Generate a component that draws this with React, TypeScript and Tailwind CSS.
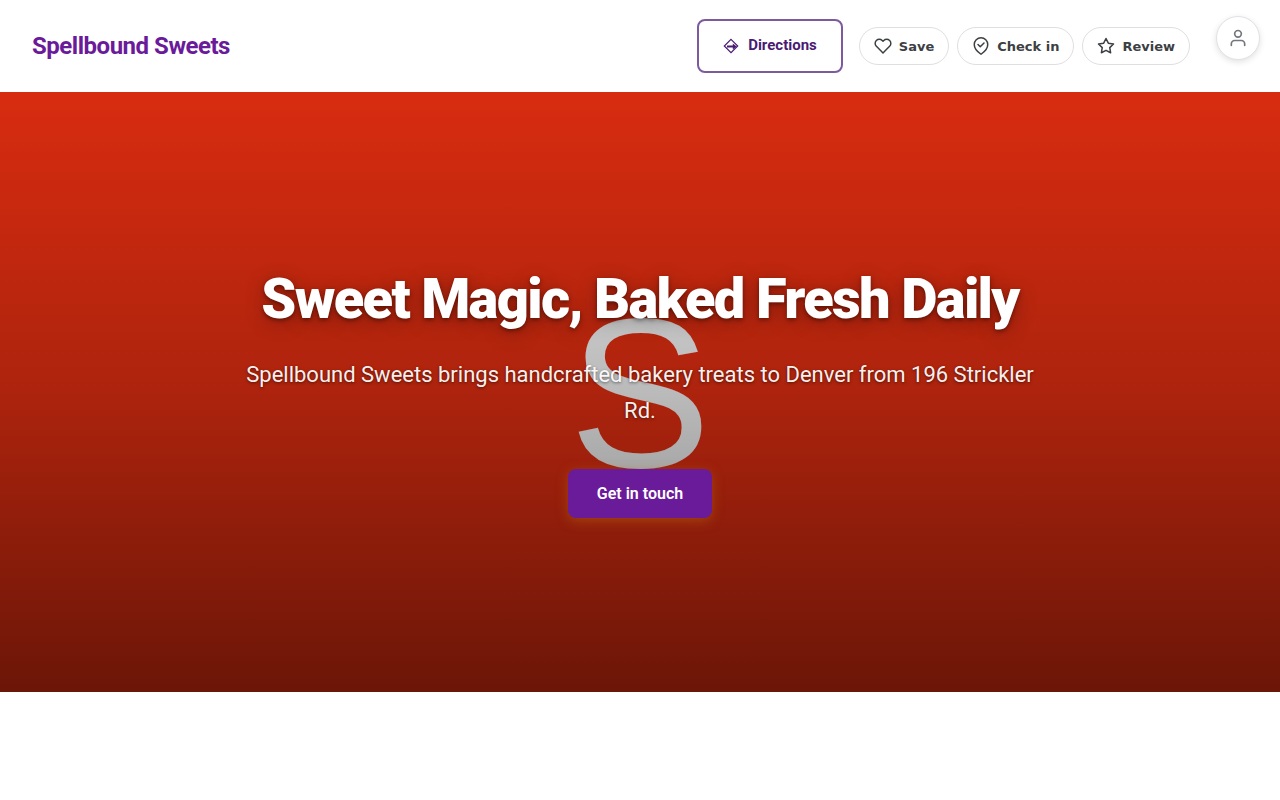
import type { ReactNode } from "react";
import { FiHeart, FiStar, FiUser } from "react-icons/fi";

function DirectionsIcon() {
  return (
    <svg width="16" height="16" viewBox="0 0 16 16" fill="none" aria-hidden="true" className="mt-0.5">
      <path d="M8 1.300 14.700 8 8 14.700 1.300 8Z" stroke="currentColor" strokeWidth="1.2" />
      <path d="M4 7.400h5.800V5.400L13.600 8.400 9.800 11.400V9.500H4Z" fill="currentColor" />
    </svg>
  );
}

function CheckInIcon() {
  return (
    <svg
      width="18"
      height="18"
      viewBox="0 0 24 24"
      fill="none"
      stroke="currentColor"
      strokeWidth="2"
      strokeLinecap="round"
      strokeLinejoin="round"
      aria-hidden="true"
    >
      <path d="M21 10c0 7-9 13-9 13s-9-6-9-13a9 9 0 0 1 18 0z" />
      <path d="m8 10 3 3 5-5" />
    </svg>
  );
}

function Pill({ icon, label }: { icon: ReactNode; label: string }) {
  return (
    <button
      type="button"
      className="flex h-[38px] items-center gap-[7px] rounded-full border border-[#dfdfe2] bg-white px-3.5 font-['DejaVu_Sans',sans-serif] text-[13px] font-semibold text-[#3c4043]"
    >
      {icon}
      <span className="pt-px">{label}</span>
    </button>
  );
}

export default function App() {
  return (
    <div className="min-h-screen bg-white font-[Roboto,sans-serif]">
      <header className="flex h-[92px] items-center justify-between pl-8 pr-5">
        <a href="#" className="text-2xl font-bold tracking-[-0.02em] text-[#6a1b9a]">
          Spellbound Sweets
        </a>
        <div className="flex items-center">
          <a
            href="#directions"
            className="mr-4 flex h-[54px] items-center gap-[9px] rounded-lg border-2 border-[#7d5a9e] px-6 pb-0.5 text-[15px] font-bold text-[#4a1a73]"
          >
            <DirectionsIcon />
            Directions
          </a>
          <div className="flex gap-2">
            <Pill icon={<FiHeart size={18} />} label="Save" />
            <Pill icon={<CheckInIcon />} label="Check in" />
            <Pill icon={<FiStar size={18} />} label="Review" />
          </div>
          <button
            type="button"
            aria-label="Account"
            className="mb-4 ml-[26px] flex size-11 items-center justify-center rounded-full border border-[#e2e2e5] bg-white text-[#73777c] shadow-[0_2px_6px_rgba(0,0,0,0.12)]"
          >
            <FiUser size={20} />
          </button>
        </div>
      </header>

      <section className="relative flex h-[600px] flex-col items-center justify-center bg-[#d82c10] px-8 text-center text-white">
        <div
          aria-hidden="true"
          className="absolute inset-0 flex items-center justify-center pt-0.5 font-['Liberation_Sans',sans-serif] text-[213px] leading-none text-[#e9e9e9]"
        >
          S
        </div>
        <div className="absolute inset-0 bg-[linear-gradient(rgba(0,0,0,0),rgba(0,0,0,0.2)_50%,rgba(0,0,0,0.5))]" />
        <div className="relative flex max-w-[820px] flex-col items-center">
          <h1 className="mb-[22px] text-[56px] font-black leading-[64px] tracking-[-0.03em] [text-shadow:0_2px_4px_rgba(0,0,0,0.4),0_4px_20px_rgba(0,0,0,0.3)]">
            Sweet Magic, Baked Fresh Daily
          </h1>
          <p className="mb-10 pt-1 text-[22px] leading-9 text-white/95 [text-shadow:0_1px_3px_rgba(0,0,0,0.5)]">
            Spellbound Sweets brings handcrafted bakery treats to Denver from 196 Strickler Rd.
          </p>
          <a
            href="#contact"
            className="flex h-[49px] items-center rounded-lg bg-[#6a1b9a] px-[29px] pt-px text-base font-semibold shadow-[0_3px_12px_rgba(180,100,20,0.5)]"
          >
            Get in touch
          </a>
        </div>
      </section>
    </div>
  );
}
